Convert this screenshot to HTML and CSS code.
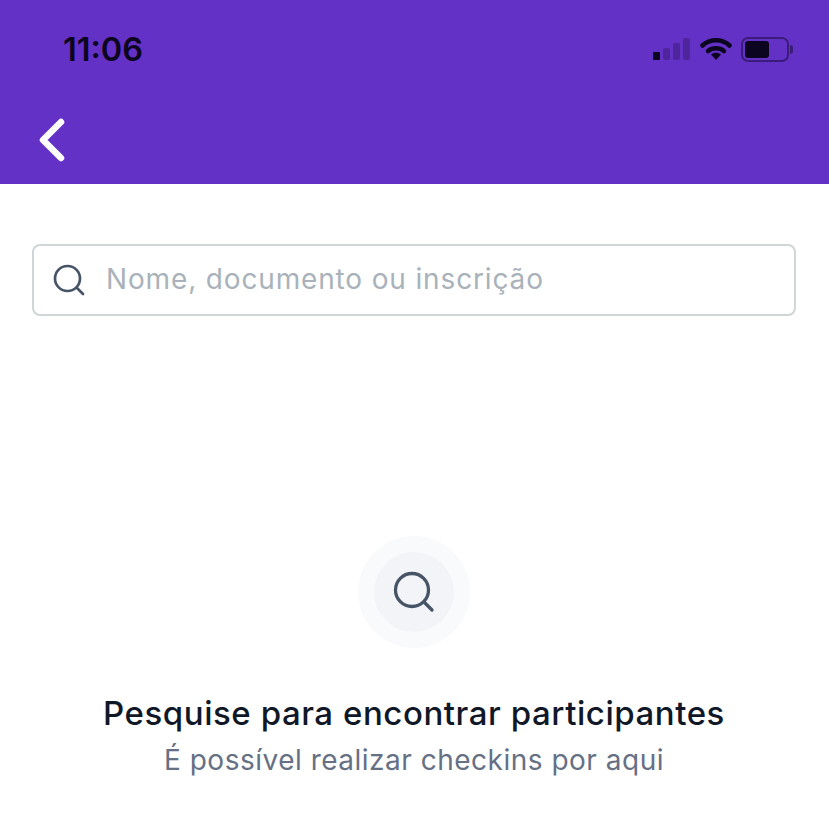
FILE: index.html
```html
<!DOCTYPE html>
<html lang="pt-BR">
<head>
    <meta charset="UTF-8">
    <meta name="viewport" content="width=device-width, initial-scale=1.0">
    <title>Pesquisar participantes</title>
    <link rel="stylesheet" href="styles.css">
</head>
<body>
    <header class="top-bar">
        <div class="status-bar">
            <span class="clock">11:06</span>
            <div class="status-icons">
                <svg class="signal" width="38" height="24" viewBox="0 0 38 24">
                    <rect x="0" y="15" width="7" height="8" rx="1" fill="#0b0520"/>
                    <rect x="10" y="11" width="7" height="12" rx="2" fill="#0b0520" fill-opacity=".25"/>
                    <rect x="20" y="6" width="7" height="17" rx="2" fill="#0b0520" fill-opacity=".25"/>
                    <rect x="30" y="1" width="7" height="22" rx="2" fill="#0b0520" fill-opacity=".25"/>
                </svg>
                <svg class="wifi" width="32" height="24" viewBox="0 0 32 24">
                    <path d="M2.500 8.500C10 1.500 22 1.500 29.500 8.500" fill="none" stroke="#0b0520" stroke-width="4.500" stroke-linecap="round"/>
                    <path d="M8 14C12.500 10.300 19.500 10.300 24 14" fill="none" stroke="#0b0520" stroke-width="4.500" stroke-linecap="round"/>
                    <path d="M11 17.500C14 15 18 15 21 17.500L16 23Z" fill="#0b0520"/>
                </svg>
                <div class="battery">
                    <div class="battery-body"><div class="battery-level"></div></div>
                    <div class="battery-cap"></div>
                </div>
            </div>
        </div>
        <div class="nav-bar">
            <svg width="28" height="46" viewBox="0 0 28 46">
                <path d="M23 5L5 23L23 41" fill="none" stroke="#fff" stroke-width="6.500" stroke-linecap="round" stroke-linejoin="round"/>
            </svg>
        </div>
    </header>

    <main class="content">
        <div class="search-box">
            <svg width="32" height="32" viewBox="0 0 32 32">
                <circle cx="14.500" cy="14.500" r="12.500" fill="none" stroke="#475467" stroke-width="2.700"/>
                <path d="M24 24L30 30" fill="none" stroke="#475467" stroke-width="2.700" stroke-linecap="round"/>
            </svg>
            <span class="placeholder">Nome, documento ou inscrição</span>
        </div>

        <div class="empty-state">
            <div class="icon-ring">
                <div class="icon-circle">
                    <svg width="42" height="42" viewBox="0 0 42 42">
                        <circle cx="19" cy="19" r="16.500" fill="none" stroke="#475467" stroke-width="3.300"/>
                        <path d="M31 31L39 39" fill="none" stroke="#475467" stroke-width="3.300" stroke-linecap="round"/>
                    </svg>
                </div>
            </div>
            <h2 class="empty-title">Pesquise para encontrar participantes</h2>
            <p class="empty-text">É possível realizar checkins por aqui</p>
        </div>
    </main>
</body>
</html>
```

FILE: styles.css
```css
* {
    box-sizing: border-box;
}

body {
    margin: 0;
    height: 821px;
    overflow: hidden;
    background: #fff;
    font-family: 'Inter', 'Liberation Sans', sans-serif;
}

.top-bar {
    height: 184px;
    background: #6431c7;
}

.status-bar {
    display: flex;
    align-items: center;
    justify-content: space-between;
    height: 98px;
    padding: 0 36px 0 63px;
}

.clock {
    font-size: 32.500px;
    font-weight: 600;
    color: #0b0520;
}

.status-icons {
    display: flex;
    align-items: center;
    gap: 9px;
}

.battery {
    display: flex;
    align-items: center;
    gap: 1px;
}

.battery-body {
    width: 48px;
    height: 25px;
    padding: 2px;
    border: 2px solid rgba(11, 5, 32, 0.45);
    border-radius: 7px;
}

.battery-level {
    width: 24px;
    height: 100%;
    border-radius: 3px;
    background: #0b0520;
}

.battery-cap {
    width: 3px;
    height: 9px;
    border-radius: 0 3px 3px 0;
    background: rgba(11, 5, 32, 0.45);
}

.nav-bar {
    display: flex;
    align-items: center;
    height: 86px;
    padding: 0 0 2px 38px;
}

.content {
    padding: 60px 33px 0 32px;
}

.search-box {
    display: flex;
    align-items: center;
    gap: 20px;
    height: 72px;
    padding: 0 16px 0 19px;
    border: 2px solid #d0d5d8;
    border-radius: 8px;
}

.placeholder {
    margin: -2px 0 0 1px;
    font-size: 28px;
    letter-spacing: 0.85px;
    color: #a9b2ba;
}

.empty-state {
    display: flex;
    flex-direction: column;
    align-items: center;
    padding-top: 220px;
}

.icon-ring {
    display: flex;
    align-items: center;
    justify-content: center;
    width: 112px;
    height: 112px;
    border-radius: 50%;
    background: #f9fafb;
}

.icon-circle {
    display: flex;
    align-items: center;
    justify-content: center;
    width: 80px;
    height: 80px;
    border-radius: 50%;
    background: #f2f4f7;
}

.empty-title {
    margin: 44px 0 0;
    font-size: 33px;
    line-height: 42px;
    letter-spacing: 0.55px;
    font-weight: 500;
    color: #101828;
}

.empty-text {
    margin: 7px 0 0;
    font-size: 28px;
    line-height: 38px;
    letter-spacing: 0.5px;
    color: #667085;
}
```
